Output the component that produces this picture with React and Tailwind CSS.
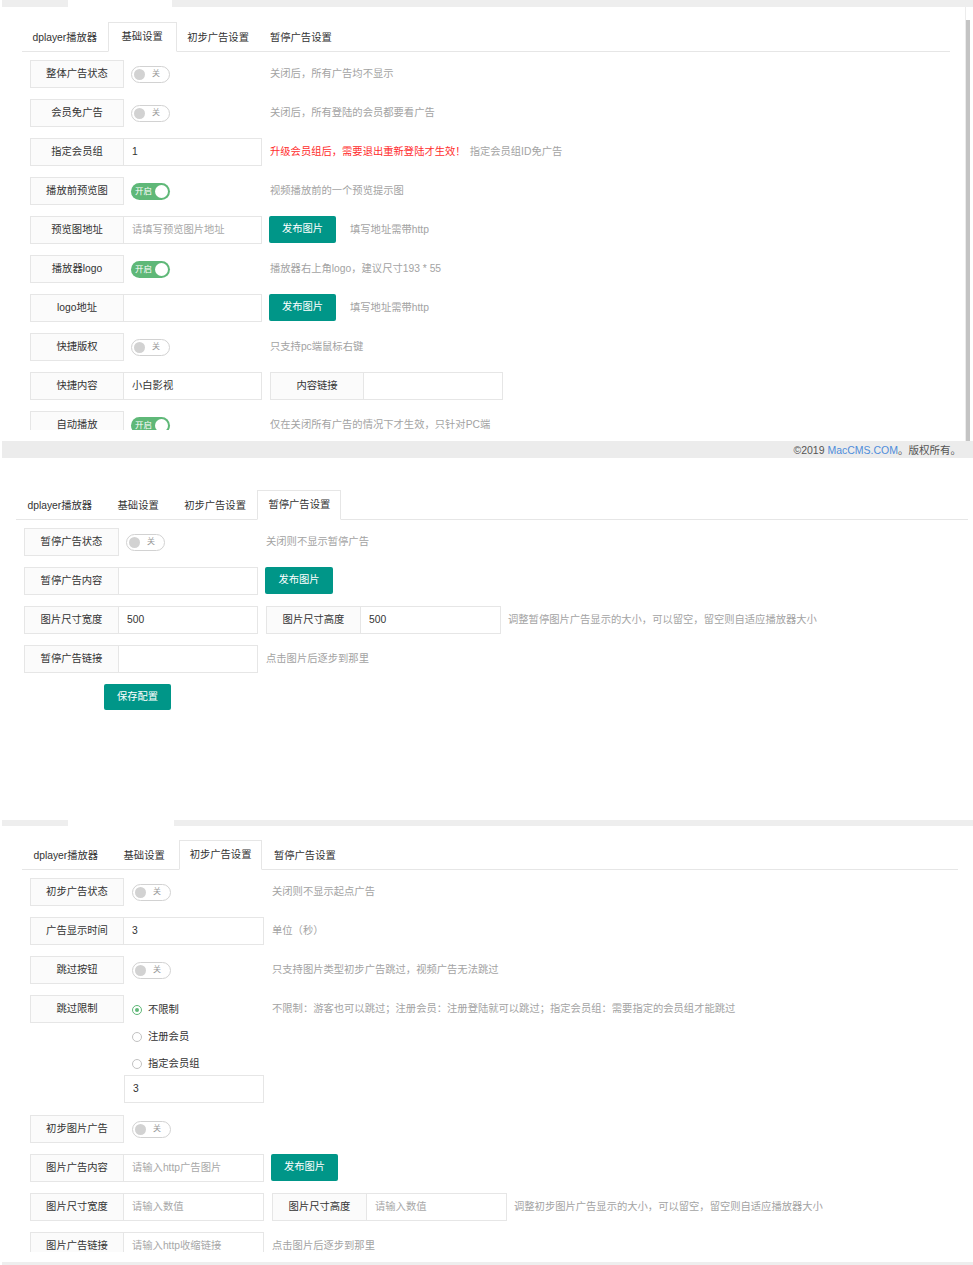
import React from "react";

const G1 = {
  lw: "w-[94px]", iw: "w-[138px]", tpad: "pl-[7px]", bw: "w-[67px]",
  l2w: "w-[94px]", i2w: "w-[139px]",
};
const G2 = {
  lw: "w-[95px]", iw: "w-[139px]", tpad: "pl-[7px]", bw: "w-[68px]",
  l2w: "w-[95px]", i2w: "w-[140px]",
};
const G3 = {
  lw: "w-[94px]", iw: "w-[140px]", tpad: "pl-[8px]", bw: "w-[67px]",
  l2w: "w-[95px]", i2w: "w-[140px]",
};

function Label({ g, w, children }) {
  return (
    <div className={`${w || g.lw} h-[28px] shrink-0 border border-[#e6e6e6] bg-[#fbfbfb] flex items-center justify-center text-[#333]`}>
      {children}
    </div>
  );
}

function Input({ g, w, value, placeholder }) {
  return (
    <div className={`${w || g.iw} h-[28px] shrink-0 border border-l-0 border-[#e6e6e6] bg-white flex items-center pl-[8px]`}>
      {value ? (
        <span className="text-[#333]">{value}</span>
      ) : placeholder ? (
        <span className="text-[#a8a8a8]">{placeholder}</span>
      ) : null}
    </div>
  );
}

function Toggle({ on }) {
  return on ? (
    <div className="w-[39px] h-[17px] rounded-full bg-[#5fb878] flex items-center justify-between pl-[4px] pr-[2px]">
      <span className="text-[8.5px] text-white leading-none">开启</span>
      <span className="w-[13px] h-[13px] rounded-full bg-white" />
    </div>
  ) : (
    <div className="w-[39px] h-[17px] rounded-full border border-[#d2d2d2] bg-white flex items-center justify-between pl-[2px] pr-[9px]">
      <span className="w-[11px] h-[11px] rounded-full bg-[#d2d2d2]" />
      <span className="text-[8px] text-[#999] leading-none">关</span>
    </div>
  );
}

function ToggleCell({ g, on }) {
  return (
    <div className={`${g.iw} h-[28px] shrink-0 flex items-center ${g.tpad}`}>
      <Toggle on={on} />
    </div>
  );
}

function Hint({ children, className }) {
  return (
    <div className={`${className || "ml-[8px]"} h-[28px] flex items-center whitespace-nowrap text-[#a3a3a3]`}>
      {children}
    </div>
  );
}

function Btn({ g, children, className }) {
  return (
    <div className={`${className || "ml-[7px]"} ${g.bw} h-[27px] shrink-0 rounded-[2px] bg-[#009688] text-white flex items-center justify-center`}>
      {children}
    </div>
  );
}

function Row({ children, className }) {
  return <div className={`flex items-start ${className || "mb-[11px]"}`}>{children}</div>;
}

function Tabs({ active, className, pad }) {
  const names = ["dplayer播放器", "基础设置", "初步广告设置", "暂停广告设置"];
  return (
    <div className={`${className} h-[30px] border-b border-[#e6e6e6] flex`}>
      {names.map((n, i) => (
        <div
          key={i}
          className={
            i === active
              ? "h-[30px] min-w-[69px] px-[10px] pt-[1px] flex items-center justify-center border border-[#e6e6e6] border-b-white bg-white text-[#333] whitespace-nowrap"
              : `h-[30px] min-w-[69px] ${pad} pt-[2px] flex items-center justify-center text-[#333] whitespace-nowrap`
          }
        >
          {n}
        </div>
      ))}
    </div>
  );
}

function Radio({ checked, children }) {
  return (
    <div className="h-[22px] flex items-center pl-[8px]">
      {checked ? (
        <span className="w-[10px] h-[10px] rounded-full border border-[#5fb878] flex items-center justify-center">
          <span className="w-[4px] h-[4px] rounded-full bg-[#5fb878]" />
        </span>
      ) : (
        <span className="w-[10px] h-[10px] rounded-full border border-[#c2c2c2]" />
      )}
      <span className="ml-[6px] text-[#333]">{children}</span>
    </div>
  );
}

function Panel1() {
  const g = G1;
  return (
    <div className="h-[458px] flex flex-col">
      <div className="h-[7px] flex shrink-0">
        <div className="ml-[2px] w-[66px] bg-[#eeeeee]" />
        <div className="w-[104px]" />
        <div className="flex-1 bg-[#eeeeee]" />
      </div>
      <div className="h-[434px] flex shrink-0">
        <div className="w-[965px] shrink-0">
          <div className="h-[423px] overflow-hidden">
            <Tabs active={1} pad="px-[10.5px]" className="mt-[15px] ml-[22px] w-[928px]" />
            <div className="mt-[7px] ml-[30px] pt-[1px]">
              <Row>
                <Label g={g}>整体广告状态</Label>
                <ToggleCell g={g} />
                <Hint>关闭后，所有广告均不显示</Hint>
              </Row>
              <Row>
                <Label g={g}>会员免广告</Label>
                <ToggleCell g={g} />
                <Hint>关闭后，所有登陆的会员都要看广告</Hint>
              </Row>
              <Row>
                <Label g={g}>指定会员组</Label>
                <Input g={g} value="1" />
                <Hint>
                  <span className="text-[#ff2d2d]">升级会员组后，需要退出重新登陆才生效！</span>
                  <span className="ml-[4px]">指定会员组ID免广告</span>
                </Hint>
              </Row>
              <Row>
                <Label g={g}>播放前预览图</Label>
                <ToggleCell g={g} on />
                <Hint>视频播放前的一个预览提示图</Hint>
              </Row>
              <Row>
                <Label g={g}>预览图地址</Label>
                <Input g={g} placeholder="请填写预览图片地址" />
                <Btn g={g}>发布图片</Btn>
                <Hint className="ml-[14px]">填写地址需带http</Hint>
              </Row>
              <Row>
                <Label g={g}>播放器logo</Label>
                <ToggleCell g={g} on />
                <Hint>播放器右上角logo，建议尺寸193 * 55</Hint>
              </Row>
              <Row>
                <Label g={g}>logo地址</Label>
                <Input g={g} />
                <Btn g={g}>发布图片</Btn>
                <Hint className="ml-[14px]">填写地址需带http</Hint>
              </Row>
              <Row>
                <Label g={g}>快捷版权</Label>
                <ToggleCell g={g} />
                <Hint>只支持pc端鼠标右键</Hint>
              </Row>
              <Row>
                <Label g={g}>快捷内容</Label>
                <Input g={g} value="小白影视" />
                <div className="ml-[8px] flex">
                  <Label g={g} w={g.l2w}>内容链接</Label>
                  <Input g={g} w={g.i2w} />
                </div>
              </Row>
              <Row>
                <Label g={g}>自动播放</Label>
                <ToggleCell g={g} on />
                <Hint>仅在关闭所有广告的情况下才生效，只针对PC端</Hint>
              </Row>
            </div>
          </div>
        </div>
        <div className="w-[8px] flex shrink-0">
          <div className="w-px bg-[#ececec]" />
          <div className="mt-[13px] w-[4px] bg-[#c4c4c4]" />
        </div>
      </div>
      <div className="h-[17px] ml-[2px] shrink-0 bg-[#ececec] flex items-center justify-end pr-[12px] pt-[1px] text-[10.5px] text-[#555]">
        <span>©2019&nbsp;</span>
        <span className="text-[#4f8ddb]">MacCMS.COM</span>
        <span>。版权所有。</span>
      </div>
    </div>
  );
}

function Panel2() {
  const g = G2;
  return (
    <div className="h-[362px] flex flex-col">
      <Tabs active={3} pad="px-[11.5px]" className="mt-[32px] ml-[16px] w-[952px]" />
      <div className="mt-[8px] ml-[24px]">
        <Row>
          <Label g={g}>暂停广告状态</Label>
          <ToggleCell g={g} />
          <Hint>关闭则不显示暂停广告</Hint>
        </Row>
        <Row>
          <Label g={g}>暂停广告内容</Label>
          <Input g={g} />
          <Btn g={g}>发布图片</Btn>
        </Row>
        <Row>
          <Label g={g}>图片尺寸宽度</Label>
          <Input g={g} value="500" />
          <div className="ml-[8px] flex">
            <Label g={g} w={g.l2w}>图片尺寸高度</Label>
            <Input g={g} w={g.i2w} value="500" />
          </div>
          <Hint className="ml-[7px]">调整暂停图片广告显示的大小，可以留空，留空则自适应播放器大小</Hint>
        </Row>
        <Row>
          <Label g={g}>暂停广告链接</Label>
          <Input g={g} />
          <Hint>点击图片后逐步到那里</Hint>
        </Row>
        <div className="ml-[80px] w-[67px] h-[26px] rounded-[2px] bg-[#009688] text-white flex items-center justify-center">
          保存配置
        </div>
      </div>
    </div>
  );
}

function Panel3() {
  const g = G3;
  return (
    <div className="h-[445px] flex flex-col">
      <div className="h-[6px] flex shrink-0">
        <div className="ml-[2px] w-[66px] bg-[#eeeeee]" />
        <div className="w-[106px]" />
        <div className="flex-1 bg-[#eeeeee]" />
      </div>
      <div className="h-[426px] overflow-hidden shrink-0">
        <Tabs active={2} pad="px-[11.5px]" className="mt-[14px] ml-[22px] w-[936px]" />
        <div className="mt-[8px] ml-[30px]">
          <Row>
            <Label g={g}>初步广告状态</Label>
            <ToggleCell g={g} />
            <Hint>关闭则不显示起点广告</Hint>
          </Row>
          <Row>
            <Label g={g}>广告显示时间</Label>
            <Input g={g} value="3" />
            <Hint>单位（秒）</Hint>
          </Row>
          <Row>
            <Label g={g}>跳过按钮</Label>
            <ToggleCell g={g} />
            <Hint>只支持图片类型初步广告跳过，视频广告无法跳过</Hint>
          </Row>
          <Row className="mb-[12px]">
            <Label g={g}>跳过限制</Label>
            <div className={`${g.iw} shrink-0 flex flex-col`}>
              <div className="pt-[4px] flex flex-col gap-[5px]">
                <Radio checked>不限制</Radio>
                <Radio>注册会员</Radio>
                <Radio>指定会员组</Radio>
              </div>
              <div className="h-[28px] border border-[#e6e6e6] bg-white flex items-center pl-[8px] text-[#333]">3</div>
            </div>
            <Hint>不限制：游客也可以跳过；注册会员：注册登陆就可以跳过；指定会员组：需要指定的会员组才能跳过</Hint>
          </Row>
          <Row>
            <Label g={g}>初步图片广告</Label>
            <ToggleCell g={g} />
          </Row>
          <Row>
            <Label g={g}>图片广告内容</Label>
            <Input g={g} placeholder="请输入http广告图片" />
            <Btn g={g}>发布图片</Btn>
          </Row>
          <Row>
            <Label g={g}>图片尺寸宽度</Label>
            <Input g={g} placeholder="请输入数值" />
            <div className="ml-[8px] flex">
              <Label g={g} w={g.l2w}>图片尺寸高度</Label>
              <Input g={g} w={g.i2w} placeholder="请输入数值" />
            </div>
            <Hint className="ml-[7px]">调整初步图片广告显示的大小，可以留空，留空则自适应播放器大小</Hint>
          </Row>
          <Row>
            <Label g={g}>图片广告链接</Label>
            <Input g={g} placeholder="请输入http收缩链接" />
            <Hint>点击图片后逐步到那里</Hint>
          </Row>
        </div>
      </div>
      <div className="h-[10px] shrink-0" />
      <div className="h-[3px] ml-[2px] shrink-0 bg-[#eeeeee]" />
    </div>
  );
}

export default function App() {
  return (
    <div className="w-[973px] h-[1265px] overflow-hidden bg-white text-[10.3px] leading-none font-['Liberation_Sans','Noto_Sans_CJK_SC',sans-serif]">
      <Panel1 />
      <Panel2 />
      <Panel3 />
    </div>
  );
}
